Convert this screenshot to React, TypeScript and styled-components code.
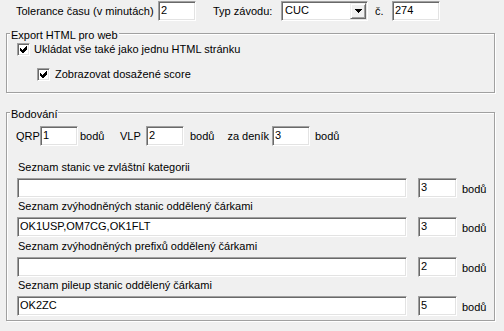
import React from 'react';
import styled, { createGlobalStyle } from 'styled-components';

const Global = createGlobalStyle`
  html, body { margin: 0; padding: 0; background: #f0f0f0; }
  body {
    font-family: "Liberation Sans", Arial, sans-serif;
    font-size: 11px;
    color: #000;
  }
`;

const Page = styled.div`
  width: 504px;
  height: 331px;
  overflow: hidden;
  background: #f0f0f0;
  display: flex;
  flex-direction: column;
`;

const Row = styled.div<{ $pl?: number; $mt?: number; $h?: number }>`
  display: flex;
  align-items: flex-start;
  flex: none;
  height: ${p => p.$h ?? 20}px;
  margin-top: ${p => p.$mt ?? 0}px;
  padding-left: ${p => p.$pl ?? 0}px;
`;

const Text = styled.span<{ $w?: number; $ml?: number; $pt?: number; $right?: boolean }>`
  display: block;
  flex: none;
  box-sizing: border-box;
  ${p => (p.$w != null ? `width: ${p.$w}px;` : '')}
  margin-left: ${p => p.$ml ?? 0}px;
  padding-top: ${p => p.$pt ?? 4}px;
  ${p => (p.$right ? 'text-align: right; padding-right: 3px;' : '')}
  line-height: 13px;
  white-space: nowrap;
`;

const Edit = styled.input<{ $w: number; $ml?: number }>`
  flex: none;
  width: ${p => p.$w}px;
  height: 20px;
  box-sizing: border-box;
  margin: 0 0 0 ${p => p.$ml ?? 0}px;
  font: inherit;
  line-height: 13px;
  color: #000;
  background: #fff;
  border-style: solid;
  border-width: 1px;
  border-color: #a0a0a0 #ffffff #ffffff #a0a0a0;
  box-shadow: inset 1px 1px 0 #696969, inset -1px -1px 0 #e3e3e3;
  padding: 1px 0 4px 2px;
  outline: none;
  border-radius: 0;
`;

const Combo = styled.div<{ $w: number }>`
  flex: none;
  display: flex;
  align-items: flex-start;
  justify-content: space-between;
  width: ${p => p.$w}px;
  height: 20px;
  box-sizing: border-box;
  background: #fff;
  border-style: solid;
  border-width: 1px;
  border-color: #a0a0a0 #ffffff #ffffff #a0a0a0;
  box-shadow: inset 1px 1px 0 #696969, inset -1px -1px 0 #e3e3e3;
  padding: 1px 1px 1px 3px;
`;

const ComboText = styled.span`
  line-height: 13px;
  padding-top: 1px;
`;

const DropButton = styled.div`
  width: 16px;
  height: 16px;
  box-sizing: border-box;
  background: #f0f0f0;
  border-style: solid;
  border-width: 1px;
  border-color: #f0f0f0 #696969 #696969 #f0f0f0;
  box-shadow: inset 1px 1px 0 #ffffff, inset -1px -1px 0 #a0a0a0;
  display: flex;
  align-items: center;
  justify-content: center;
`;

const Group = styled.div<{ $h: number; $mt: number }>`
  position: relative;
  flex: none;
  box-sizing: border-box;
  margin-left: 6px;
  margin-top: ${p => p.$mt}px;
  width: 489px;
  height: ${p => p.$h}px;
  border: 1px solid #a0a0a0;
  box-shadow: inset 1px 1px 0 #ffffff, 1px 1px 0 #ffffff;
  display: flex;
  flex-direction: column;
`;

const Legend = styled.span`
  position: absolute;
  top: -5px;
  left: 3px;
  padding: 0 1px;
  line-height: 13px;
  background: #f0f0f0;
  white-space: nowrap;
`;

const CheckRow = styled.label<{ $pl: number; $mt: number }>`
  display: flex;
  align-items: flex-start;
  padding-left: ${p => p.$pl}px;
  margin-top: ${p => p.$mt}px;
  line-height: 13px;
  white-space: nowrap;
`;

const Box = styled.span`
  flex: none;
  width: 13px;
  height: 13px;
  box-sizing: border-box;
  background: #fff;
  border-style: solid;
  border-width: 1px;
  border-color: #a0a0a0 #ffffff #ffffff #a0a0a0;
  box-shadow: inset 1px 1px 0 #696969, inset -1px -1px 0 #e3e3e3;
  display: flex;
  align-items: center;
  justify-content: center;
`;

const CheckLabel = styled.span<{ $ml: number }>`
  margin-left: ${p => p.$ml}px;
`;

const ListArea = styled.div`
  display: flex;
  flex-direction: column;
  margin-top: 13px;
  padding-left: 10px;
`;

const ListBlock = styled.div`
  display: flex;
  flex-direction: column;
`;

const ListCaption = styled.div<{ $h: number }>`
  height: ${p => p.$h}px;
  box-sizing: border-box;
  padding-top: ${p => p.$h - 17}px;
  padding-left: 1px;
  line-height: 13px;
  white-space: nowrap;
`;

const Check = () => (
  <Box>
    <svg width="7" height="7" viewBox="0 0 7 7" shapeRendering="crispEdges">
      <path d="M0 2 L0 5 L2 7 L3 7 L7 3 L7 0 L6 0 L2 4 Z" fill="#000" />
    </svg>
  </Box>
);

const Arrow = () => (
  <svg width="7" height="4" viewBox="0 0 7 4" shapeRendering="crispEdges">
    <path d="M0 0 H7 L3.5 4 Z" fill="#000" />
  </svg>
);

type ListItem = { caption: string; value: string; points: string; h: number };

const lists: ListItem[] = [
  { caption: 'Seznam stanic ve zvláštní kategorii', value: '', points: '3', h: 19 },
  { caption: 'Seznam zvýhodněných stanic oddělený čárkami', value: 'OK1USP,OM7CG,OK1FLT', points: '3', h: 19 },
  { caption: 'Seznam zvýhodněných prefixů oddělený čárkami', value: '', points: '2', h: 20 },
  { caption: 'Seznam pileup stanic oddělený čárkami', value: 'OK2ZC', points: '5', h: 19 },
];

export default function App() {
  return (
    <>
      <Global />
      <Page>
        <Row $pl={16} $mt={1} $h={21}>
          <Text $w={142}>Tolerance času (v minutách)</Text>
          <Edit $w={38} defaultValue="2" readOnly />
          <Text $ml={17} $w={68}>Typ závodu:</Text>
          <Combo $w={87}>
            <ComboText>CUC</ComboText>
            <DropButton>
              <Arrow />
            </DropButton>
          </Combo>
          <Text $ml={7} $w={17}>č.</Text>
          <Edit $w={48} defaultValue="274" readOnly />
        </Row>

        <Group $h={60} $mt={11}>
          <Legend>Export HTML pro web</Legend>
          <CheckRow $pl={10} $mt={9}>
            <Check />
            <CheckLabel $ml={4}>Ukládat vše také jako jednu HTML stránku</CheckLabel>
          </CheckRow>
          <CheckRow $pl={30} $mt={12}>
            <Check />
            <CheckLabel $ml={5}>Zobrazovat dosažené score</CheckLabel>
          </CheckRow>
        </Group>

        <Group $h={209} $mt={19}>
          <Legend>Bodování</Legend>
          <Row $pl={9} $mt={13}>
            <Text $w={24}>QRP</Text>
            <Edit $w={38} defaultValue="1" readOnly />
            <Text $ml={2} $w={40}>bodů</Text>
            <Text $w={26}>VLP</Text>
            <Edit $w={38} defaultValue="2" readOnly />
            <Text $ml={6} $w={26}>bodů</Text>
            <Text $w={56} $right>za deník</Text>
            <Edit $w={38} defaultValue="3" readOnly />
            <Text $ml={5}>bodů</Text>
          </Row>
          <ListArea>
            {lists.map(item => (
              <ListBlock key={item.caption}>
                <ListCaption $h={item.h}>{item.caption}</ListCaption>
                <Row>
                  <Edit $w={390} defaultValue={item.value} readOnly />
                  <Edit $w={39} $ml={11} defaultValue={item.points} readOnly />
                  <Text $ml={5} $pt={5}>bodů</Text>
                </Row>
              </ListBlock>
            ))}
          </ListArea>
        </Group>
      </Page>
    </>
  );
}
